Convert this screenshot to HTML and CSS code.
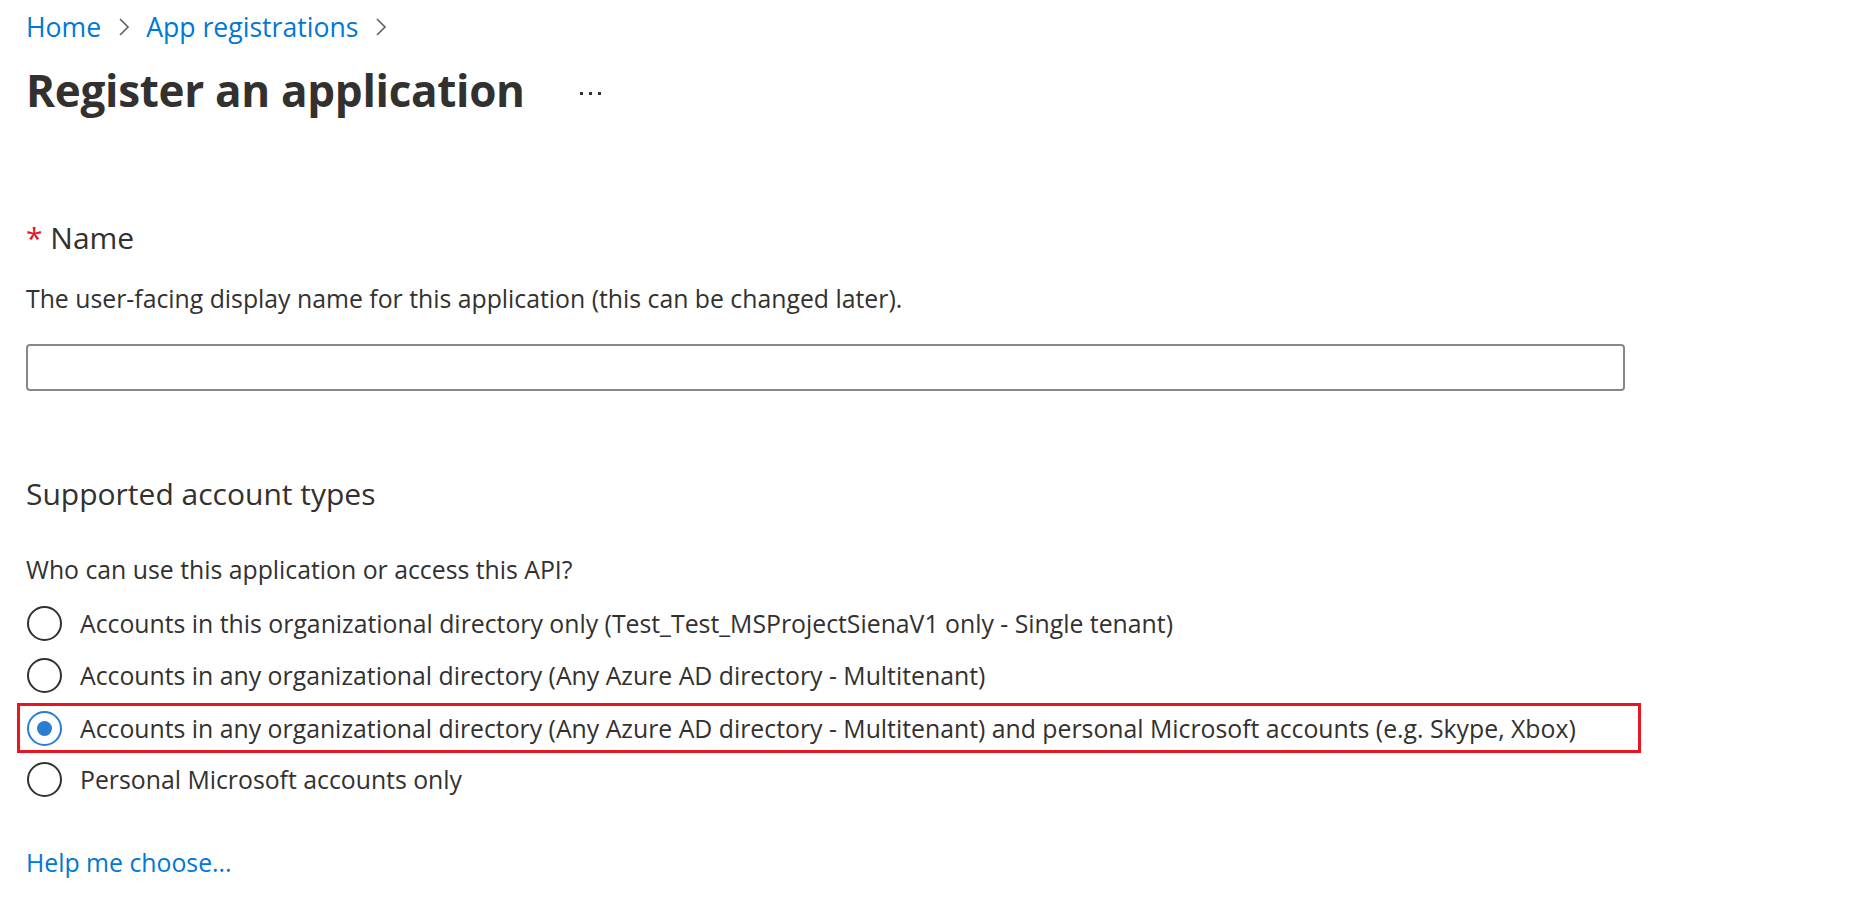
FILE: index.html
```html
<!DOCTYPE html>
<html lang="en">
<head>
<meta charset="utf-8">
<title>Register an application</title>
<link rel="stylesheet" href="styles.css">
</head>
<body>
<div class="page">
  <nav class="breadcrumb">
    <a class="crumb" href="#">Home</a>
    <span class="chev"><svg width="12" height="20" viewBox="0 0 12 20"><path d="M2 2 L10 10 L2 18" fill="none" stroke="#605e5c" stroke-width="1.6"/></svg></span>
    <a class="crumb" href="#">App registrations</a>
    <span class="chev"><svg width="12" height="20" viewBox="0 0 12 20"><path d="M2 2 L10 10 L2 18" fill="none" stroke="#605e5c" stroke-width="1.6"/></svg></span>
  </nav>
  <header class="title-row">
    <h1 class="title">Register an application</h1>
    <span class="more"><i></i><i></i><i></i></span>
  </header>

  <section class="section name-section">
    <div class="label"><span class="req">*</span> Name</div>
    <p class="desc">The user-facing display name for this application (this can be changed later).</p>
    <div class="input"></div>
  </section>

  <section class="section accounts-section">
    <div class="label">Supported account types</div>
    <p class="desc question">Who can use this application or access this API?</p>
    <div class="options">
      <div class="option"><span class="radio"></span><span class="opt-text">Accounts in this organizational directory only (Test_Test_MSProjectSienaV1 only - Single tenant)</span></div>
      <div class="option"><span class="radio"></span><span class="opt-text">Accounts in any organizational directory (Any Azure AD directory - Multitenant)</span></div>
      <div class="option selected"><span class="radio"></span><span class="opt-text">Accounts in any organizational directory (Any Azure AD directory - Multitenant) and personal Microsoft accounts (e.g. Skype, Xbox)</span></div>
      <div class="option"><span class="radio"></span><span class="opt-text">Personal Microsoft accounts only</span></div>
    </div>
    <a class="help" href="#">Help me choose...</a>
  </section>
</div>
</body>
</html>
```

FILE: styles.css
```css
html, body {
  margin: 0;
  padding: 0;
  background: #ffffff;
}
body {
  font-family: "Open Sans", "Noto Sans", sans-serif;
  color: #323130;
}
.page {
  padding: 8px 0 0 26px;
}
.breadcrumb {
  display: flex;
  align-items: center;
  height: 38px;
  font-size: 26.6px;
}
.crumb {
  color: #0078d4;
  text-decoration: none;
}
.chev {
  display: inline-flex;
  margin: 0 16px 0 17px;
}
.title-row {
  display: flex;
  align-items: center;
  height: 72px;
  margin-top: 8px;
}
.title {
  margin: 0;
  font-size: 44px;
  font-weight: 700;
  color: #323130;
  letter-spacing: -0.3px;
}
.more {
  display: flex;
  gap: 6px;
  margin-left: 55px;
  margin-top: 6px;
}
.more i {
  width: 3px;
  height: 3px;
  background: #323130;
  display: block;
}
.section {
  margin: 0;
}
.name-section {
  padding-top: 92px;
}
.label {
  font-size: 30px;
  line-height: 40px;
}
.req {
  color: #e8141f;
}
.desc {
  margin: 0;
  font-size: 24.8px;
  line-height: 36px;
  margin-top: 22px;
}
.input {
  margin-top: 28px;
  width: 1595px;
  height: 43px;
  border: 2px solid #8a8886;
  border-radius: 4px;
}
.accounts-section {
  padding-top: 83px;
}
.question {
  margin-top: 37px;
}
.options {
  display: flex;
  flex-direction: column;
  margin-top: 10px;
}
.option {
  display: flex;
  align-items: center;
  height: 52px;
  font-size: 24.8px;
}
.radio {
  box-sizing: border-box;
  width: 35px;
  height: 35px;
  border: 2px solid #323130;
  border-radius: 50%;
  margin-left: 1px;
  margin-right: 18px;
  position: relative;
  flex: none;
}
.option.selected {
  box-sizing: border-box;
  outline: 3px solid #e8141f;
  outline-offset: 0;
  margin-left: -6px;
  padding-left: 6px;
  width: 1618px;
  height: 44px;
  margin-top: 5px;
  margin-bottom: 3px;
}
.option.selected .radio {
  border-color: #2b7cd3;
}
.option.selected .radio::after {
  content: "";
  position: absolute;
  left: 50%;
  top: 50%;
  width: 15px;
  height: 15px;
  margin: -7.5px 0 0 -7.5px;
  border-radius: 50%;
  background: #2b7cd3;
}
.help {
  display: inline-block;
  margin-top: 40px;
  font-size: 24.8px;
  color: #0078d4;
  text-decoration: none;
}
```
